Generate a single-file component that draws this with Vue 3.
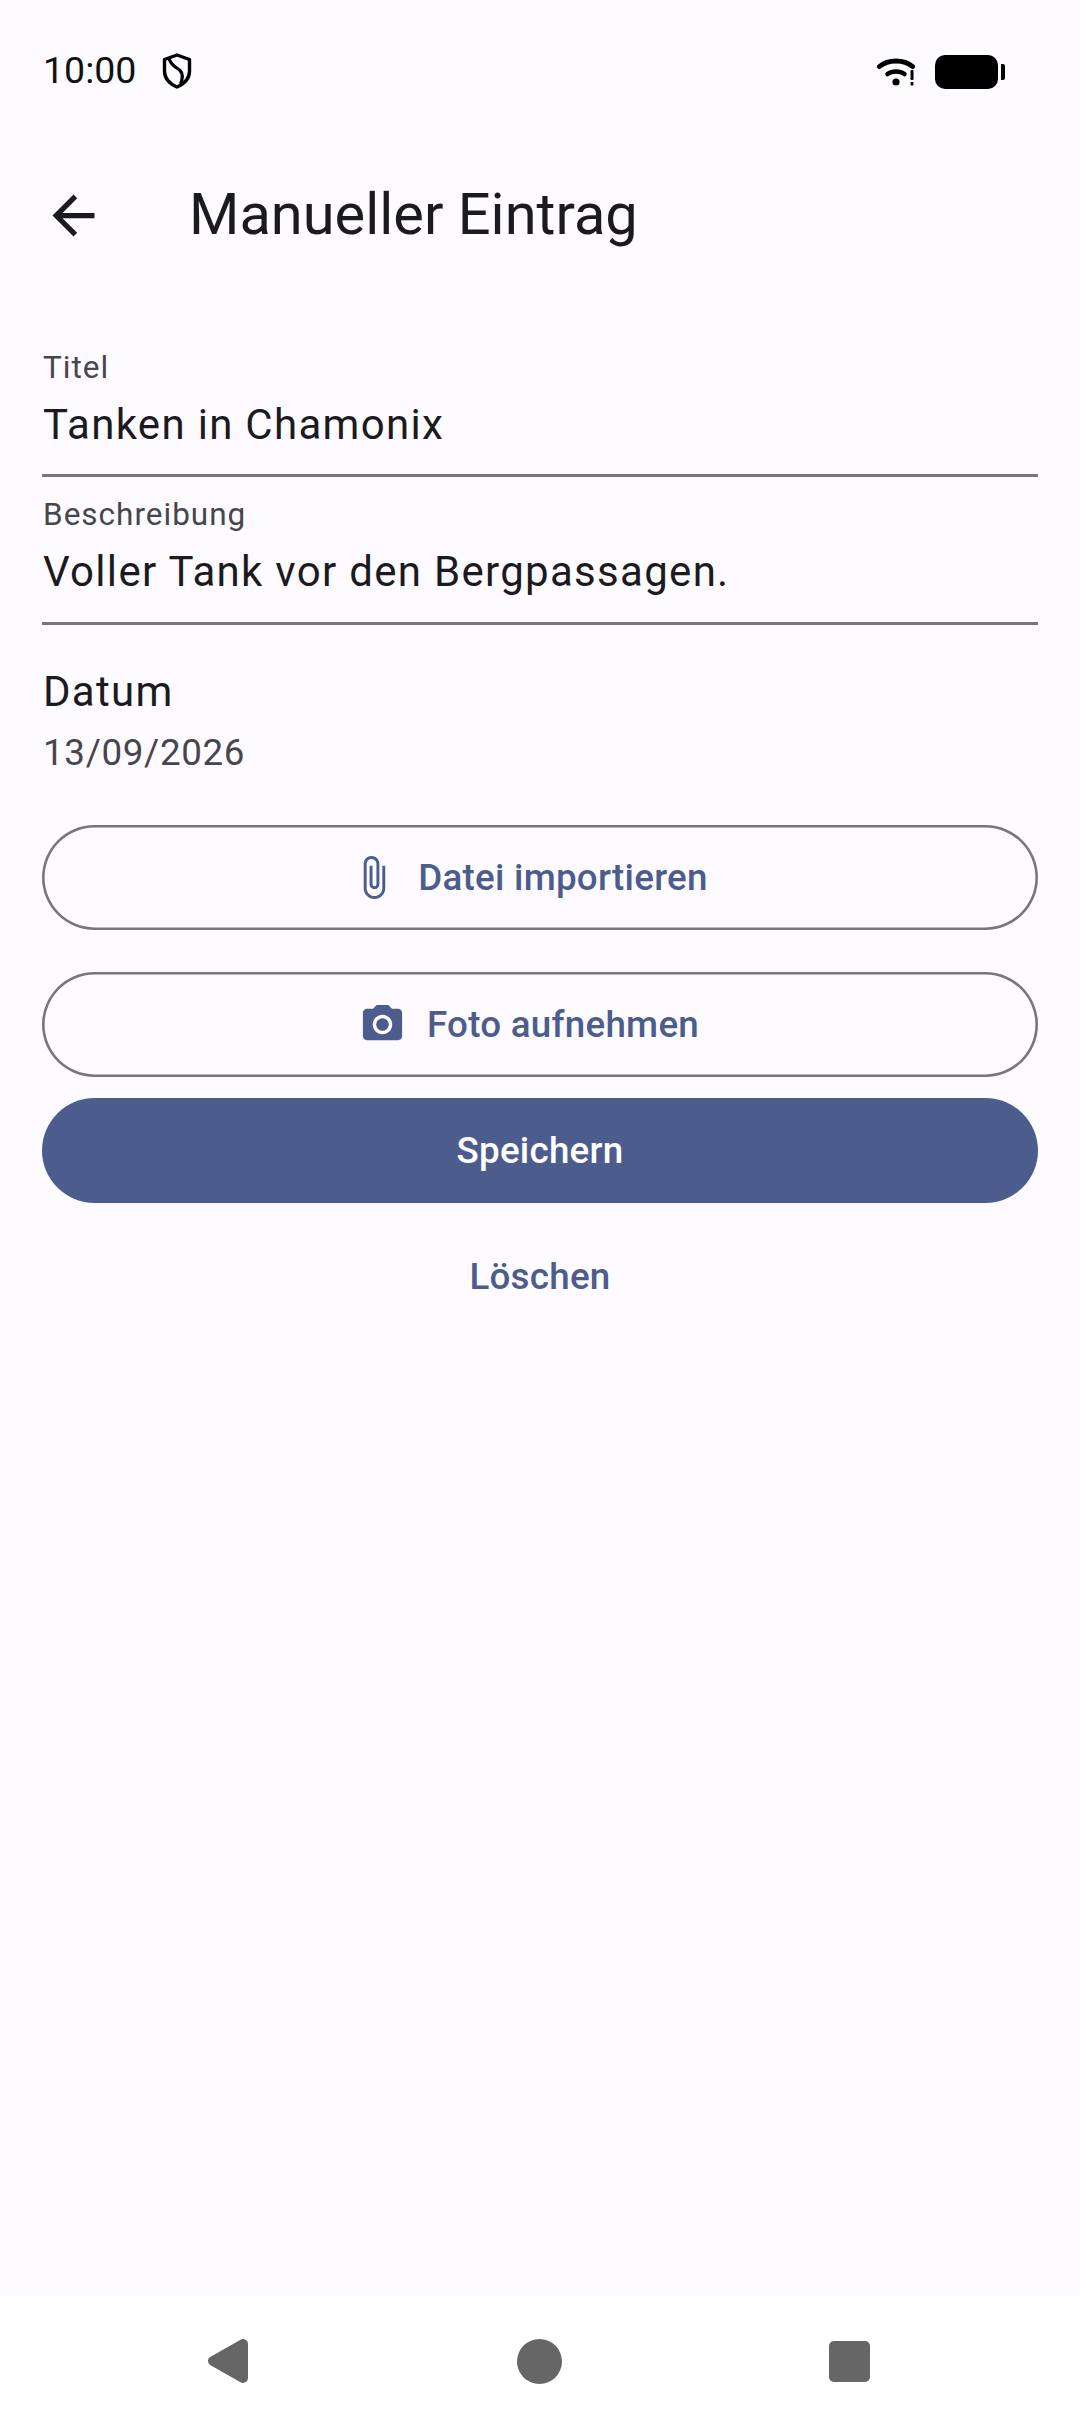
<template>
  <div class="screen">
    <div class="status-bar">
      <span class="time">10:00</span>
      <svg class="shield" viewBox="0 0 30 36" width="30" height="36">
        <path d="M15 2 L27.5 6.5 V18 C27.5 25.5 22 31 15 34 C8 31 2.5 25.5 2.5 18 V6.5 Z" fill="none" stroke="#000" stroke-width="3.4" stroke-linejoin="round" />
        <path d="M7 5 C8 12 14 14 18 17.5 C21 20.5 21 25 18.5 31" fill="none" stroke="#000" stroke-width="3.2" />
      </svg>
      <div class="status-right">
        <svg class="wifi" viewBox="0 0 38 28" width="38" height="28">
          <path d="M2.5 8.5 C11 1 27 1 35.5 8.5" fill="none" stroke="#000" stroke-width="5" stroke-linecap="round" />
          <path d="M10.5 16 C15 12.5 23 12.5 27.5 16" fill="none" stroke="#000" stroke-width="4.5" stroke-linecap="round" />
          <circle cx="19" cy="24" r="3.6" />
          <rect x="33.5" y="12" width="3" height="10" rx="1" />
          <rect x="33.5" y="24" width="3" height="3.6" rx="1" />
        </svg>
        <div class="battery"><span class="battery-cap"></span></div>
      </div>
    </div>

    <header class="app-bar">
      <svg class="back" viewBox="0 0 24 24" width="63" height="63">
        <path d="M20 11H7.83l5.59-5.59L12 4l-8 8 8 8 1.41-1.41L7.83 13H20v-2z" fill="#1b1b1f" />
      </svg>
      <h1>Manueller Eintrag</h1>
    </header>

    <main class="content">
      <div v-for="f in fields" :key="f.label" class="field">
        <label>{{ f.label }}</label>
        <div class="value">{{ f.value }}</div>
      </div>

      <div class="date-tile">
        <div class="date-title">Datum</div>
        <div class="date-value">13/09/2026</div>
      </div>

      <button class="btn outlined first">
        <svg viewBox="0 0 24 24" width="47" height="47">
          <path d="M16.5 6v11.5c0 2.21-1.79 4-4 4s-4-1.79-4-4V5c0-1.38 1.12-2.5 2.5-2.5s2.5 1.12 2.5 2.5v10.5c0 .55-.45 1-1 1s-1-.45-1-1V6H10v9.5c0 1.38 1.12 2.5 2.5 2.5s2.5-1.12 2.5-2.5V5c0-2.21-1.79-4-4-4S7 2.79 7 5v12.5c0 3.04 2.46 5.5 5.5 5.5s5.5-2.46 5.5-5.5V6h-1.5z" />
        </svg>
        Datei importieren
      </button>
      <button class="btn outlined second">
        <svg viewBox="0 0 24 24" width="47" height="47">
          <circle cx="12" cy="12" r="3.2" />
          <path d="M9 2L7.17 4H4c-1.1 0-2 .9-2 2v12c0 1.1.9 2 2 2h16c1.1 0 2-.9 2-2V6c0-1.1-.9-2-2-2h-3.17L15 2H9zm3 15c-2.76 0-5-2.24-5-5s2.24-5 5-5 5 2.24 5 5-2.24 5-5 5z" />
        </svg>
        Foto aufnehmen
      </button>
      <button class="btn filled">Speichern</button>
      <button class="btn text">Löschen</button>
    </main>

    <nav class="nav-bar">
      <svg viewBox="0 0 41 44" width="41" height="44">
        <polygon points="5,22 35,5 35,39" fill="#666" stroke="#666" stroke-width="10" stroke-linejoin="round" />
      </svg>
      <span class="nav-circle"></span>
      <span class="nav-square"></span>
    </nav>
  </div>
</template>

<script setup>
const fields = [
  { label: 'Titel', value: 'Tanken in Chamonix' },
  { label: 'Beschreibung', value: 'Voller Tank vor den Bergpassagen.' }
]
</script>

<style>
body {
  margin: 0;
  background: #fdfbff;
}
</style>

<style scoped>
.screen {
  width: 1080px;
  height: 2424px;
  display: flex;
  flex-direction: column;
  background: #fdfbff;
  color: #1b1b1f;
  font-family: Roboto, "Liberation Sans", sans-serif;
  overflow: hidden;
}

.status-bar {
  height: 131px;
  box-sizing: border-box;
  padding: 12px 82px 0 43px;
  display: flex;
  align-items: center;
  flex-shrink: 0;
}
.time {
  font-size: 37.5px;
  color: #111;
  margin-bottom: 3px;
}
.shield {
  margin: 0 0 2px 26px;
}
.status-right {
  margin-left: auto;
  display: flex;
  align-items: center;
  gap: 20px;
}
.battery {
  position: relative;
  width: 63px;
  height: 34px;
  border-radius: 10px;
  background: #000;
}
.battery-cap {
  position: absolute;
  left: 66px;
  top: 9px;
  width: 4px;
  height: 16px;
  background: #000;
  border-radius: 0 2px 2px 0;
}

.app-bar {
  height: 168px;
  flex-shrink: 0;
  display: flex;
  align-items: center;
  padding-left: 42px;
}
h1 {
  margin: 0 0 2px 84px;
  font-size: 57.75px;
  font-weight: 400;
  color: #1b1b1f;
}

.content {
  flex: 1;
  padding: 30.5px 42px 0;
  display: flex;
  flex-direction: column;
}

.field {
  height: 147.5px;
  box-sizing: border-box;
  border-bottom: 3px solid #77767a;
  padding-left: 1px;
  padding-top: 18px;
}
label {
  display: block;
  font-size: 31.5px;
  line-height: 40px;
  letter-spacing: 1px;
  color: #46464f;
}
.value {
  font-size: 42px;
  line-height: 56px;
  letter-spacing: 1.3px;
  margin-top: 9px;
}

.date-tile {
  padding: 39px 0 0 1px;
  height: 200.5px;
  box-sizing: border-box;
}
.date-title {
  font-size: 42px;
  line-height: 56px;
  letter-spacing: 1.3px;
}
.date-value {
  font-size: 36.75px;
  line-height: 50px;
  letter-spacing: 0.66px;
  color: #46464f;
  margin-top: 8px;
}

.btn {
  height: 105px;
  border-radius: 52.5px;
  display: flex;
  align-items: center;
  justify-content: center;
  gap: 21px;
  font-family: inherit;
  font-size: 36.75px;
  font-weight: 500;
  letter-spacing: 0.26px;
  padding: 0;
  flex-shrink: 0;
  border: none;
}
.btn svg {
  fill: #4c5d8d;
}
.outlined {
  background: transparent;
  box-shadow: inset 0 0 0 2.6px #77767a;
  color: #4c5d8d;
  padding-right: 22px;
}
.second {
  margin-top: 42px;
}
.filled {
  margin-top: 21px;
  background: #4c5d8d;
  color: #fff;
}
.text {
  margin-top: 21px;
  background: transparent;
  color: #4c5d8d;
}

.nav-bar {
  height: 127px;
  flex-shrink: 0;
  box-sizing: border-box;
  display: flex;
  align-items: flex-start;
  justify-content: space-between;
  padding: 42px 210px 0 208px;
  background: #fff;
}
.nav-circle {
  width: 45px;
  height: 45px;
  border-radius: 50%;
  background: #666;
}
.nav-square {
  width: 41px;
  height: 41px;
  margin-top: 2px;
  border-radius: 5px;
  background: #666;
}
</style>
